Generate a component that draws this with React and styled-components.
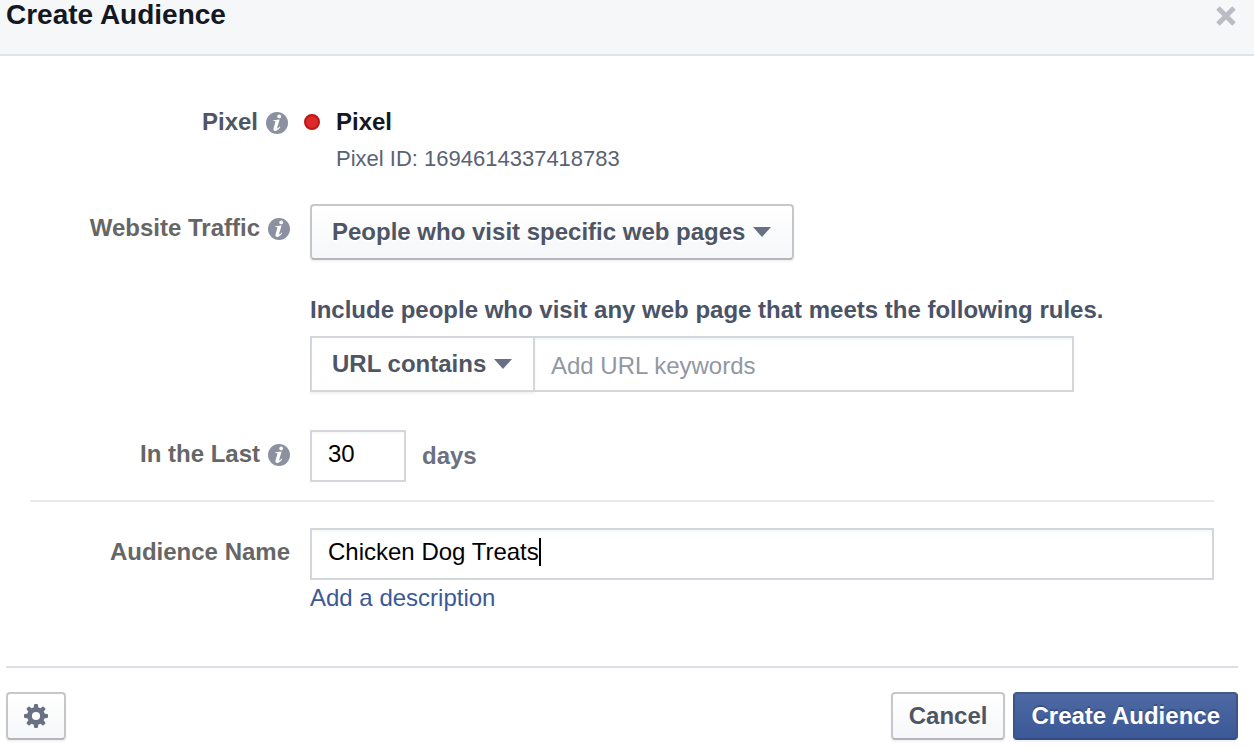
import { useState } from "react";
import styled, { createGlobalStyle, css } from "styled-components";

const GlobalStyle = createGlobalStyle`
  * {
    box-sizing: border-box;
  }

  body {
    margin: 0;
    background-color: #fff;
    color: #4b5366;
    font-family: "Liberation Sans", Arial, sans-serif;
    font-size: 24px;
    line-height: 28px;
  }

  button,
  input,
  select {
    margin: 0;
    font: inherit;
    line-height: 28px;
  }
`;

const Header = styled.header`
  display: flex;
  align-items: flex-start;
  justify-content: space-between;
  padding: 0 16px 24px 6px;
  border-bottom: 2px solid #e2e3e5;
  background-color: #f6f7f9;
`;

const Title = styled.h1`
  margin: 0;
  color: #141823;
  font-size: 28px;
  font-weight: bold;
  line-height: 30px;
`;

const CloseButton = styled.button`
  display: flex;
  padding: 4px 0 0;
  border: none;
  background: none;
  cursor: pointer;
`;

const Form = styled.form`
  margin: 0;
`;

const Body = styled.div`
  padding: 52px 40px 54px 30px;
`;

const Row = styled.div`
  display: grid;
  grid-template-columns: 260px minmax(0, 1fr);
  column-gap: 20px;
  align-items: start;
`;

const PixelRow = styled(Row)`
  grid-template-columns: 258px minmax(0, 1fr);
  column-gap: 16px;
  margin-bottom: 30px;
`;

const LabelCell = styled.div`
  display: flex;
  align-items: center;
  justify-content: flex-end;
  gap: 8px;
  padding-top: ${({ $flush }) => ($flush ? "0" : "10px")};
  color: ${({ $flush }) => ($flush ? "#4e5665" : "#666")};
  font-weight: bold;
`;

const InfoSvg = styled.svg`
  display: block;
  flex: none;
`;

const PixelInfo = styled.div`
  display: grid;
  grid-template-columns: 16px minmax(0, 1fr);
  gap: 8px 16px;
  align-items: center;
`;

const StatusDot = styled.span`
  width: 16px;
  height: 16px;
  border: 2px solid #be1515;
  border-radius: 50%;
  background-color: #dc2929;
`;

const PixelName = styled.span`
  color: #141823;
  font-weight: bold;
`;

const PixelId = styled.span`
  grid-column: 2;
  color: #5a6274;
  font-size: 22px;
  line-height: 30px;
`;

const SelectWrapper = styled.div`
  position: relative;
  display: inline-block;
  vertical-align: top;
`;

const Select = styled.select`
  display: block;
  appearance: none;
  padding: 12px 46px 12px 20px;
  border: 2px solid #c6c7ca;
  border-bottom-color: #b4b5b9;
  border-radius: 4px;
  outline: none;
  background: linear-gradient(#fff, #f6f7f9);
  box-shadow: 0 2px 2px rgba(0, 0, 0, 0.05);
  color: #4e5665;
  font-weight: bold;
  text-shadow: 0 2px 0 #fff;
  cursor: pointer;

  ${({ $attached }) =>
    $attached &&
    css`
      border-color: #d3d6db;
      border-radius: 0;
      background: #fff;
    `}
`;

const Arrow = styled.svg`
  position: absolute;
  top: 23px;
  right: 23px;
  pointer-events: none;
`;

const Rules = styled.fieldset`
  min-width: 0;
  margin: 36px 0 38px;
  padding: 0;
  border: none;
`;

const RulesTitle = styled.legend`
  margin-bottom: 12px;
  padding: 0;
  font-weight: bold;
`;

const RuleLine = styled.div`
  display: flex;
  max-width: 764px;
`;

const KeywordInput = styled.input`
  flex: 1;
  min-width: 0;
  padding: 14px 16px 10px;
  border: 2px solid #d3d6db;
  border-left: none;
  border-radius: 0;
  outline: none;
  box-shadow: inset 0 2px 0 #f6f7f8;
  color: #000;

  &::placeholder {
    color: #9197a3;
    opacity: 1;
  }
`;

const DaysLine = styled.div`
  display: flex;
  align-items: center;
  gap: 16px;
`;

const fieldBox = css`
  padding: 8px 16px 12px;
  border: 2px solid #d3d6db;
  border-radius: 0;
  background-color: #fff;
  box-shadow: inset 0 2px 0 #f8f9fa;
`;

const DaysInput = styled.input`
  ${fieldBox}
  width: 96px;
  outline: none;
  color: #000;
`;

const DaysUnit = styled.span`
  color: #6a7180;
  font-weight: bold;
`;

const Divider = styled.hr`
  margin: 18px 0 26px;
  border: none;
  border-top: 2px solid #e9eaed;
`;

const NameBox = styled.div`
  ${fieldBox}
  display: flex;
  align-items: center;
  margin-bottom: 4px;
`;

const NameInput = styled.input`
  field-sizing: content;
  max-width: 100%;
  height: 28px;
  padding: 0;
  border: none;
  outline: none;
  background: none;
  color: #000;
  caret-color: transparent;
`;

const Caret = styled.span`
  width: 2px;
  height: 28px;
  background-color: #000;
`;

const DescriptionLink = styled.a`
  display: block;
  width: fit-content;
  color: #3b5998;
  text-decoration: none;

  &:hover {
    text-decoration: underline;
  }
`;

const Footer = styled.footer`
  display: flex;
  align-items: center;
  gap: 8px;
  margin: 0 16px 0 6px;
  padding: 24px 0 8px;
  border-top: 2px solid #dcdee3;
`;

const Button = styled.button`
  display: flex;
  align-items: center;
  justify-content: center;
  min-height: 48px;
  padding: 8px 16px;
  border: 2px solid #c6c7ca;
  border-bottom-color: #b4b5b9;
  border-radius: 4px;
  background: linear-gradient(#fff, #f6f7f9);
  box-shadow: 0 2px 2px rgba(0, 0, 0, 0.05);
  color: #4e5665;
  font-weight: bold;
  text-shadow: 0 2px 0 #fff;
  cursor: pointer;

  ${({ $primary }) =>
    $primary &&
    css`
      border-color: #435a8b #3c5488 #334c83;
      background: linear-gradient(#4e69a2, #3b5998);
      color: #fff;
      text-shadow: 0 -2px 0 rgba(0, 0, 0, 0.2);
    `}
`;

const SettingsButton = styled(Button)`
  margin-right: auto;
`;

const GEAR_ANGLES = [0, 45, 90, 135, 180, 225, 270, 315];

function InfoIcon() {
  return (
    <InfoSvg width="22" height="24" viewBox="0 0 22 24" role="img" aria-label="Info">
      <circle cx="11" cy="13" r="11" fill="#8c91a1" />
      <circle cx="13.2" cy="6.4" r="1.9" fill="#fff" />
      <path
        d="M7.4 10.2 L13.6 9.4 L11.3 17.2 Q10.9 18.9 11.7 18.5 Q12.5 18.1 13.6 16.6 L14.3 17.1 Q12 20.9 9.3 20.9 Q6.8 20.9 7.6 18 L9.3 12.2 Q9.6 11.1 8.6 11.1 L7.2 11.1 Z"
        fill="#fff"
      />
    </InfoSvg>
  );
}

function GearIcon() {
  return (
    <svg width="24" height="24" viewBox="-12 -12 24 24" aria-hidden="true">
      <circle r="6.5" fill="none" stroke="#697083" strokeWidth="4.8" />
      {GEAR_ANGLES.map((angle) => (
        <path
          key={angle}
          d="M-2.4 -7 L-2 -11 Q-1.9 -12 -0.9 -12 L0.9 -12 Q1.9 -12 2 -11 L2.4 -7 Z"
          fill="#697083"
          transform={`rotate(${angle})`}
        />
      ))}
    </svg>
  );
}

function Dropdown({ id, label, options, attached }) {
  return (
    <SelectWrapper>
      <Select id={id} aria-label={label} $attached={attached}>
        {options.map((option) => (
          <option key={option}>{option}</option>
        ))}
      </Select>
      <Arrow width="18" height="10" viewBox="0 0 18 10" aria-hidden="true">
        <path d="M0 0 H18 L9 10 Z" fill="#697083" />
      </Arrow>
    </SelectWrapper>
  );
}

function App() {
  const [keywords, setKeywords] = useState("");
  const [days, setDays] = useState("30");
  const [name, setName] = useState("Chicken Dog Treats");

  return (
    <>
      <GlobalStyle />
      <Header>
        <Title>Create Audience</Title>
        <CloseButton type="button" aria-label="Close">
          <svg width="24" height="24" viewBox="0 0 24 24" aria-hidden="true">
            <path d="M4 4 L20 20 M20 4 L4 20" stroke="#b9bcc5" strokeWidth="5" />
          </svg>
        </CloseButton>
      </Header>

      <Form onSubmit={(e) => e.preventDefault()}>
        <Body>
          <PixelRow>
            <LabelCell $flush>
              <span>Pixel</span>
              <InfoIcon />
            </LabelCell>
            <PixelInfo>
              <StatusDot />
              <PixelName>Pixel</PixelName>
              <PixelId>Pixel ID: 1694614337418783</PixelId>
            </PixelInfo>
          </PixelRow>

          <Row>
            <LabelCell>
              <label htmlFor="traffic">Website Traffic</label>
              <InfoIcon />
            </LabelCell>
            <div>
              <Dropdown id="traffic" options={["People who visit specific web pages"]} />
              <Rules>
                <RulesTitle>
                  Include people who visit any web page that meets the following rules.
                </RulesTitle>
                <RuleLine>
                  <Dropdown
                    id="rule"
                    label="Rule type"
                    options={["URL contains"]}
                    attached
                  />
                  <KeywordInput
                    type="text"
                    aria-label="URL keywords"
                    placeholder="Add URL keywords"
                    value={keywords}
                    onChange={(e) => setKeywords(e.target.value)}
                  />
                </RuleLine>
              </Rules>
            </div>
          </Row>

          <Row>
            <LabelCell>
              <label htmlFor="days">In the Last</label>
              <InfoIcon />
            </LabelCell>
            <DaysLine>
              <DaysInput
                id="days"
                type="text"
                value={days}
                onChange={(e) => setDays(e.target.value)}
              />
              <DaysUnit>days</DaysUnit>
            </DaysLine>
          </Row>

          <Divider />

          <Row>
            <LabelCell>
              <label htmlFor="name">Audience Name</label>
            </LabelCell>
            <div>
              <NameBox>
                <NameInput
                  id="name"
                  type="text"
                  value={name}
                  onChange={(e) => setName(e.target.value)}
                />
                <Caret />
              </NameBox>
              <DescriptionLink href="#description">Add a description</DescriptionLink>
            </div>
          </Row>
        </Body>

        <Footer>
          <SettingsButton type="button" aria-label="Settings">
            <GearIcon />
          </SettingsButton>
          <Button type="button">Cancel</Button>
          <Button type="submit" $primary>
            Create Audience
          </Button>
        </Footer>
      </Form>
    </>
  );
}

export default App;
